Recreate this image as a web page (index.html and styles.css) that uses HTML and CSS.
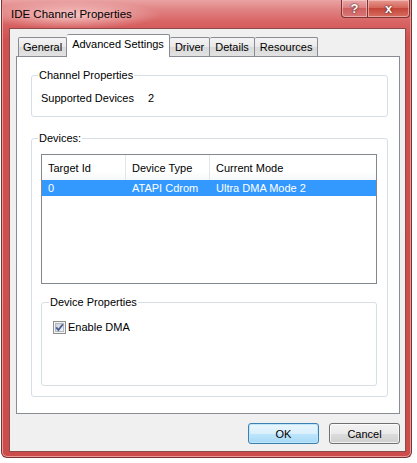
FILE: index.html
```html
<!DOCTYPE html>
<html lang="en">
<head>
    <meta charset="UTF-8">
    <title>IDE Channel Properties</title>
    <link rel="stylesheet" href="styles.css">
</head>
<body>
    <div class="window">
        <div class="titlebar">
            <span class="title">IDE Channel Properties</span>
            <div class="caption">
                <span class="cap help">?</span>
                <span class="cap close">x</span>
            </div>
        </div>
        <div class="client">
            <div class="tabs">
                <span class="tab">General</span>
                <span class="tab active">Advanced Settings</span>
                <span class="tab">Driver</span>
                <span class="tab">Details</span>
                <span class="tab">Resources</span>
            </div>
            <div class="panel">
                <fieldset class="group channel">
                    <legend>Channel Properties</legend>
                    <div class="info">
                        <span class="info-label">Supported Devices</span>
                        <span>2</span>
                    </div>
                </fieldset>
                <fieldset class="group devices">
                    <legend>Devices:</legend>
                    <div class="listview">
                        <div class="lv-head">
                            <span class="col c1">Target Id</span>
                            <span class="col c2">Device Type</span>
                            <span class="col c3">Current Mode</span>
                        </div>
                        <div class="lv-row selected">
                            <span class="col c1">0</span>
                            <span class="col c2">ATAPI Cdrom</span>
                            <span class="col c3">Ultra DMA Mode 2</span>
                        </div>
                    </div>
                    <fieldset class="group devprops">
                        <legend>Device Properties</legend>
                        <label class="check">
                            <svg width="13" height="13" viewBox="0 0 13 13">
                                <defs>
                                    <linearGradient id="cbg" x1="0" y1="0" x2="1" y2="1">
                                        <stop offset="0" stop-color="#cbcfd5"/>
                                        <stop offset="1" stop-color="#f6f6f6"/>
                                    </linearGradient>
                                </defs>
                                <rect x="0.5" y="0.5" width="12" height="12" fill="#f4f4f4" stroke="#8e8f8f"/>
                                <rect x="2.5" y="2.5" width="8" height="8" fill="url(#cbg)" stroke="#b4b8bf"/>
                                <path d="M3.2 6.4 L5.4 9 L9.8 3.3" fill="none" stroke="#4a5f97" stroke-width="1.8"/>
                            </svg>
                            <span>Enable DMA</span>
                        </label>
                    </fieldset>
                </fieldset>
            </div>
            <div class="buttons">
                <button class="btn default">OK</button>
                <button class="btn">Cancel</button>
            </div>
        </div>
    </div>
</body>
</html>
```

FILE: styles.css
```css
* {
    box-sizing: border-box;
}
body {
    margin: 0;
    background: #fff;
    font-family: "Liberation Sans", Arial, sans-serif;
    font-size: 11px;
    color: #000;
}

/* window frame */
.window {
    margin-left: 1px;
    width: 411px;
    height: 458px;
    display: flex;
    flex-direction: column;
    border: 1px solid #7d3232;
    border-top: none;
    border-radius: 0 0 6px 6px;
    background: linear-gradient(180deg, #eaa2a2 0, #e08282 10px, #d86464 22px, #d05050 40px, #cc4c4c 100%);
    box-shadow: inset 1px 0 0 #e89a9a, inset -1px 0 0 #e89a9a, inset 0 -1px 0 #e89a9a;
}
.titlebar {
    height: 28px;
    display: flex;
    align-items: flex-start;
    background: radial-gradient(ellipse 90px 14px at 70px 15px, rgba(255, 225, 225, 0.75), rgba(255, 225, 225, 0) 100%);
}
.title {
    margin: 7px 0 0 9px;
    font-size: 11.5px;
    line-height: 14px;
}
.caption {
    margin-left: auto;
    margin-right: 1px;
    display: flex;
}
.cap {
    height: 18px;
    display: flex;
    align-items: center;
    justify-content: center;
    color: #fff;
    font-weight: bold;
    font-size: 13px;
    text-shadow: 0 0 2px #5a1a1a, 0 0 1px #5a1a1a;
    border: 1px solid #7a3434;
    border-top: none;
    box-shadow: inset 0 0 0 1px rgba(255, 210, 210, 0.55);
}
.help {
    width: 26px;
    border-radius: 0 0 0 4px;
    border-right: none;
    background: linear-gradient(180deg, #e9aaaa 0, #dc8080 45%, #cf6060 50%, #d97777 100%);
}
.close {
    width: 43px;
    border-radius: 0 0 4px 0;
    background: linear-gradient(180deg, #e59a92 0, #d6665a 45%, #c4463a 50%, #d86e60 100%);
}

/* dialog client area */
.client {
    flex: 1;
    margin: 0 5px 5px 7px;
    border: 1px solid #8d4a4a;
    background: #f0f0f0;
    padding: 5px 5px 0 6px;
    display: flex;
    flex-direction: column;
}
.tabs {
    height: 22px;
    padding-left: 2px;
    display: flex;
    align-items: flex-end;
}
.tab {
    height: 19px;
    padding: 0 5px;
    line-height: 18px;
    border: 1px solid #898c95;
    border-bottom: none;
    border-left: none;
    border-radius: 2px 2px 0 0;
    background: linear-gradient(180deg, #f4f4f4 0, #e9e9e9 50%, #dadada 51%, #e2e2e2 100%);
}
.tab:first-child {
    padding: 0 4px;
    border-left: 1px solid #898c95;
}
.tab.active {
    height: 23px;
    margin-bottom: -1px;
    line-height: 19px;
    background: #fff;
    position: relative;
    z-index: 1;
}
.panel {
    height: 358px;
    border: 1px solid #898c95;
    background: #fff;
    padding: 11px 11px 0 14px;
}

/* group boxes */
.group {
    margin: 0;
    border: 1px solid #d5dfe5;
    border-radius: 3px;
}
.group legend {
    margin-left: -3px;
    padding: 0 1px;
    line-height: 14px;
}
.channel {
    padding: 9px 9px 11px 9px;
}
.info {
    display: flex;
    line-height: 14px;
}
.info-label {
    width: 107px;
}
.devices {
    margin-top: 14px;
    padding: 9px 10px 10px 9px;
}

/* list view */
.listview {
    height: 130px;
    border: 1px solid #828790;
    background: #fff;
}
.lv-head {
    height: 25px;
    display: flex;
    background: linear-gradient(180deg, #fff 0, #fff 60%, #f7f8fa 100%);
}
.lv-head .col {
    line-height: 26px;
    border-right: 1px solid #e3e5e8;
}
.lv-row {
    height: 16px;
    display: flex;
    line-height: 16px;
}
.lv-row.selected {
    background: #3399ff;
    color: #fff;
}
.col {
    padding-left: 6px;
    white-space: nowrap;
}
.c1 {
    width: 84px;
}
.c2 {
    width: 84px;
}
.c3 {
    flex: 1;
    border-right: none !important;
}

.devprops {
    margin-top: 11px;
    padding: 11px 10px 51px 11px;
}
.devprops legend {
    margin-left: -4px;
}
.check {
    display: flex;
    align-items: center;
    gap: 2px;
    line-height: 14px;
}
.check svg {
    display: block;
}

/* bottom buttons */
.buttons {
    margin-top: 9px;
    display: flex;
    justify-content: flex-end;
    gap: 10px;
}
.btn {
    width: 71px;
    height: 21px;
    padding: 0;
    font-family: "Liberation Sans", Arial, sans-serif;
    font-size: 11px;
    color: #000;
    border: 1px solid #707070;
    border-radius: 3px;
    background: linear-gradient(180deg, #f2f2f2 0, #ebebeb 50%, #dddddd 51%, #cfcfcf 100%);
    box-shadow: inset 0 0 0 1px rgba(255, 255, 255, 0.7);
}
.btn.default {
    border-color: #3c7fb1;
    background: linear-gradient(180deg, #eaf6fd 0, #d9f0fc 50%, #bee6fd 51%, #a7d9f5 100%);
    box-shadow: inset 0 0 0 1px #bfe6fb;
}
```
